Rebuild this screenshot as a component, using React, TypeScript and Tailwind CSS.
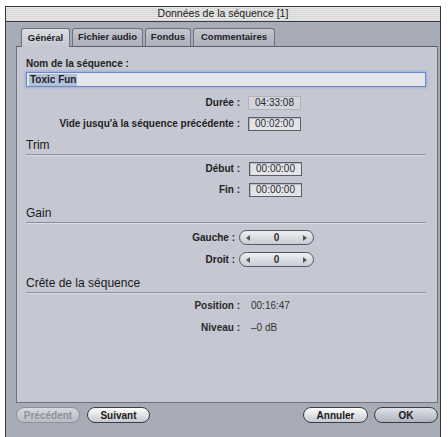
const font = "font-['Liberation_Sans',Arial,sans-serif]";

const tabs = ["Général", "Fichier audio", "Fondus", "Commentaires"];
const tabWidths = ["w-[49px]", "w-[71px]", "w-[46px]", "w-[82px]"];

function Header({ title, className }: { title: string; className: string }) {
  return (
    <div className={`${className} pb-[2px] border-b border-[#8b8e98] shadow-[0_1px_0_#dadde4]`}>
      <div className="h-[14px] leading-[14px] text-[12px] text-[#1a1a1a]">{title}</div>
    </div>
  );
}

function Field({
  label,
  value,
  labelW,
  gap,
  boxed,
  className,
}: {
  label: string;
  value: string;
  labelW: string;
  gap: string;
  boxed?: boolean;
  className: string;
}) {
  return (
    <div className={`${className} h-[14px] flex items-center`}>
      <div className={`${labelW} text-right text-[10px] leading-[12px] font-bold text-[#222]`}>{label}</div>
      <div
        className={`${gap} w-[53px] h-[14px] flex items-center justify-center text-[10px] leading-[12px] text-[#2a2a2a] ${
          boxed
            ? "border border-[#5c5e66] bg-[#e2e4ea] shadow-[inset_1px_1px_0_#b6b9c2]"
            : "border border-[#b0b3bc] bg-[#d2d5dc]"
        }`}
      >
        {value}
      </div>
    </div>
  );
}

function Stepper({ label, className }: { label: string; className: string }) {
  return (
    <div className={`${className} h-[15px] flex items-center`}>
      <div className="w-[209px] text-right text-[10px] leading-[12px] font-bold text-[#222]">{label}</div>
      <div className="ml-[4px] w-[75px] h-[15px] rounded-full border border-[#55575f] bg-gradient-to-b from-[#eef0f3] to-[#c9ccd4] flex items-center justify-between px-[6px]">
        <svg width="5" height="6" viewBox="0 0 5 6">
          <path d="M4 0 L0 3 L4 6 Z" fill="#555" />
        </svg>
        <span className="text-[10px] leading-[12px] font-bold text-[#333]">0</span>
        <svg width="5" height="6" viewBox="0 0 5 6">
          <path d="M1 0 L5 3 L1 6 Z" fill="#555" />
        </svg>
      </div>
    </div>
  );
}

function Info({ label, value, className }: { label: string; value: string; className: string }) {
  return (
    <div className={`${className} flex items-center h-[14px]`}>
      <div className="w-[214px] text-right text-[10px] leading-[12px] font-bold text-[#2a2a2a]">{label}</div>
      <div className="ml-[11px] text-[10px] leading-[12px] text-[#333]">{value}</div>
    </div>
  );
}

function Button({ label, w, disabled, primary }: { label: string; w: string; disabled?: boolean; primary?: boolean }) {
  return (
    <div
      className={`${w} h-[16px] rounded-full border flex items-center justify-center text-[10px] font-bold ${
        disabled
          ? "border-[#8d9099] text-[#8d919b] bg-gradient-to-b from-[#d7d9df] to-[#b9bcc5]"
          : primary
          ? "border-[#3b3d45] text-[#1a1a1a] bg-gradient-to-b from-[#dfe2e8] to-[#aeb3bf]"
          : "border-[#3b3d45] text-[#1a1a1a] bg-gradient-to-b from-[#ffffff] to-[#c6c9d1]"
      }`}
    >
      {label}
    </div>
  );
}

export default function App() {
  return (
    <div className={`w-[448px] h-[437px] bg-white pl-[5px] pt-[6px] overflow-hidden ${font}`}>
      <div className="w-[436px] h-[431px] border-x border-t border-[#33353c] flex flex-col">
        {/* Title bar */}
        <div className="h-[15px] border-b border-[#3b3d44] bg-[repeating-linear-gradient(180deg,#e9e9e9_0px,#e9e9e9_1px,#d6d6d6_1px,#d6d6d6_2px)] flex items-center justify-center text-[10.5px] text-[#1a1a1a]">
          Données de la séquence [1]
        </div>

        {/* Body */}
        <div className="flex-1 bg-[#a8acb7] pl-[10px] pt-[6px] flex flex-col">
          <div className="h-[18px] pl-[5px] flex items-end gap-[2px] relative z-10">
            {tabs.map((t, i) => (
              <div
                key={t}
                className={`${tabWidths[i]} h-[18px] rounded-t-[3px] border border-b-0 border-[#6e717a] flex items-center justify-center text-[9.5px] font-bold text-[#222] ${
                  i === 0
                    ? "bg-gradient-to-b from-[#dadde3] to-[#c5c8d2] h-[19px] -mb-[1px]"
                    : "bg-gradient-to-b from-[#c2c5ce] to-[#adb1bc]"
                }`}
              >
                {t}
              </div>
            ))}
          </div>

          <div className="w-[422px] h-[357px] bg-[#c5c8d2] border border-[#70737c] border-t-[#5c5f68] pl-[9px] pr-[11px] pt-[11px] flex flex-col">
            <div className="h-[12px] leading-[12px] text-[10px] font-bold text-[#222]">Nom de la séquence :</div>
            <div className="mt-[2px] h-[15px] border border-[#6b89c2] bg-[#e3e5eb] shadow-[0_0_2px_1px_#93aee0] flex items-center pl-[2px]">
              <span className="bg-[#b3c0d8] px-[1px] text-[10px] font-bold text-[#222] leading-[12px]">Toxic Fun</span>
            </div>

            <Field className="mt-[9px]" label="Durée :" value="04:33:08" labelW="w-[214px]" gap="ml-[8px]" />
            <Field className="mt-[7px]" label="Vide jusqu'à la séquence précédente :" value="00:02:00" labelW="w-[214px]" gap="ml-[8px]" boxed />

            <Header className="mt-[7px]" title="Trim" />
            <Field className="mt-[7px]" label="Début :" value="00:00:00" labelW="w-[214px]" gap="ml-[9px]" boxed />
            <Field className="mt-[7px]" label="Fin :" value="00:00:00" labelW="w-[214px]" gap="ml-[9px]" boxed />

            <Header className="mt-[9px]" title="Gain" />
            <Stepper className="mt-[7px]" label="Gauche :" />
            <Stepper className="mt-[7px]" label="Droit :" />

            <Header className="mt-[9px]" title="Crête de la séquence" />
            <Info className="mt-[6px]" label="Position :" value="00:16:47" />
            <Info className="mt-[8px]" label="Niveau :" value="–0 dB" />
          </div>

          <div className="mt-[4px] w-[422px] flex items-center">
            <Button label="Précédent" w="w-[64px]" disabled />
            <div className="ml-[7px]">
              <Button label="Suivant" w="w-[63px]" />
            </div>
            <div className="ml-auto">
              <Button label="Annuler" w="w-[65px]" />
            </div>
            <div className="ml-[6px]">
              <Button label="OK" w="w-[64px]" primary />
            </div>
          </div>
        </div>
      </div>
    </div>
  );
}
